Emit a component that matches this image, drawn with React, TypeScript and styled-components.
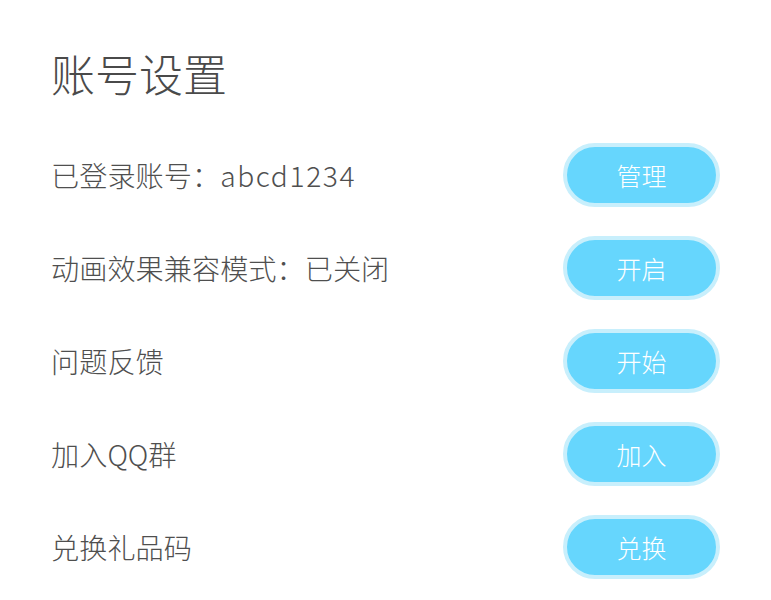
import styled, { createGlobalStyle } from "styled-components";

const GlobalStyle = createGlobalStyle`
  html, body {
    margin: 0;
    padding: 0;
    background: #ffffff;
  }
  body {
    font-family: "Noto Sans CJK SC", "Noto Sans", sans-serif;
  }
`;

const rows = [
  { label: "已登录账号：", extra: "abcd1234", action: "管理" },
  { label: "动画效果兼容模式：已关闭", action: "开启" },
  { label: "问题反馈", action: "开始" },
  { label: "加入QQ群", action: "加入" },
  { label: "兑换礼品码", action: "兑换" },
];

const App = () => {
  return (
    <>
      <GlobalStyle />
      <Page>
        <Title>账号设置</Title>
        <List>
          {rows.map((row) => (
            <Row key={row.action}>
              <Label>
                {row.label}
                {row.extra && <Account>{row.extra}</Account>}
              </Label>
              <ActionButton>{row.action}</ActionButton>
            </Row>
          ))}
        </List>
      </Page>
    </>
  );
};

const Page = styled.div`
  width: 771px;
  height: 600px;
  box-sizing: border-box;
  padding: 43px 51px 0 51px;
  display: flex;
  flex-direction: column;
`;

const Title = styled.h1`
  margin: 0 0 25px 0;
  font-size: 44px;
  line-height: 60px;
  font-weight: 300;
  color: #4a4a4a;
`;

const List = styled.div`
  display: flex;
  flex-direction: column;
`;

const Row = styled.div`
  height: 93px;
  display: flex;
  align-items: center;
  justify-content: space-between;
`;

const Label = styled.span`
  font-size: 28.2px;
  font-weight: 300;
  color: #4f4f4f;
`;

const Account = styled.span`
  letter-spacing: 1.6px;
`;

const ActionButton = styled.button`
  width: 157px;
  height: 64px;
  box-sizing: border-box;
  border: 4px solid #c8effc;
  border-radius: 32px;
  background: #66d6fd;
  color: #ffffff;
  font-family: "Noto Sans CJK SC", "Noto Sans", sans-serif;
  font-size: 25px;
  font-weight: 300;
  padding: 0;
  cursor: pointer;
`;

export default App;
